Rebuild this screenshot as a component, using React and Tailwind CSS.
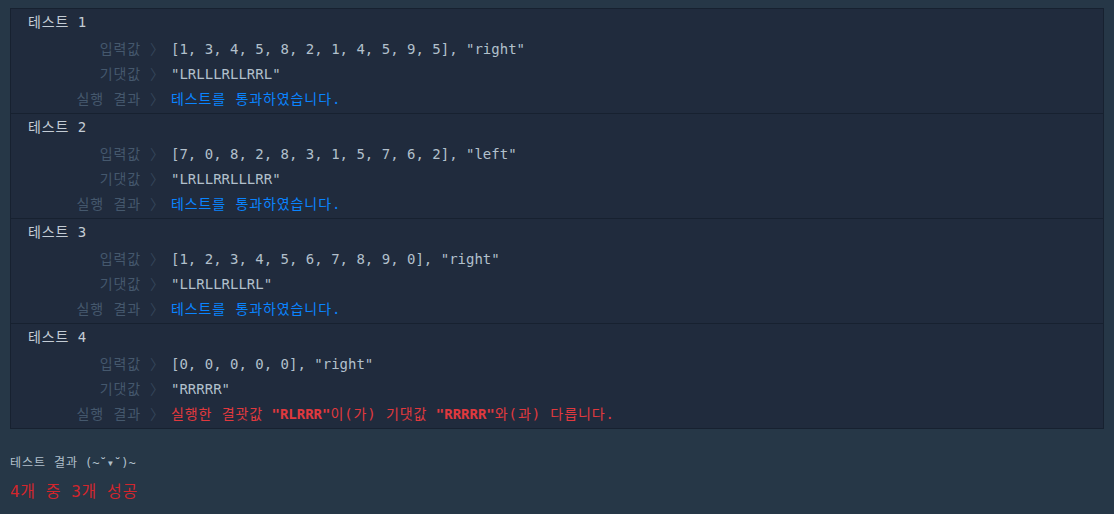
const tests = [
  {
    input: '[1, 3, 4, 5, 8, 2, 1, 4, 5, 9, 5], "right"',
    expected: '"LRLLLRLLRRL"',
    pass: true,
  },
  {
    input: '[7, 0, 8, 2, 8, 3, 1, 5, 7, 6, 2], "left"',
    expected: '"LRLLRRLLLRR"',
    pass: true,
  },
  {
    input: '[1, 2, 3, 4, 5, 6, 7, 8, 9, 0], "right"',
    expected: '"LLRLLRLLRL"',
    pass: true,
  },
  {
    input: '[0, 0, 0, 0, 0], "right"',
    expected: '"RRRRR"',
    pass: false,
    actual: '"RLRRR"',
  },
];

// hangul in the reference is a full 1em wide
function K({ children }) {
  return <span className="tracking-[0.9px]">{children}</span>;
}

function Row({ label, children }) {
  return (
    <div className="flex h-[25px] items-center">
      <div className="w-[130px] text-right text-[#45586d]">
        <K>{label}</K>
      </div>
      <div className="w-[30px] pl-[9px] text-[#34455a]">〉</div>
      <div>{children}</div>
    </div>
  );
}

export default function App() {
  return (
    <div
      className="w-[1114px] h-[514px] bg-[#263747] pt-2 overflow-hidden"
      style={{ fontFamily: '"DejaVu Sans Mono", "Noto Sans CJK KR", monospace' }}
    >
      <div className="mx-[10px] border border-[#172130] bg-[#202b3d] text-[14px]">
        {tests.map((t, i) => (
          <div
            key={i}
            className={
              "pb-[1px] " + (i < tests.length - 1 ? "border-b border-[#172130]" : "")
            }
          >
            <div className="flex h-[27px] items-center pl-[17px] text-[#c3ccd5]">
              <K>테스트</K>&nbsp;{i + 1}
            </div>
            <div className="h-[1px]" />
            <Row label="입력값">
              <span className="text-[#b2c0cc]">{t.input}</span>
            </Row>
            <Row label="기댓값">
              <span className="text-[#b2c0cc]">{t.expected}</span>
            </Row>
            <Row label="실행 결과">
              {t.pass ? (
                <span className="text-[#0a84ff]">
                  <K>테스트를 통과하였습니다.</K>
                </span>
              ) : (
                <span className="text-[#e0393e]">
                  <K>실행한 결괏값</K> <b>{t.actual}</b>
                  <K>이(가) 기댓값</K> <b>{t.expected}</b>
                  <K>와(과) 다릅니다.</K>
                </span>
              )}
            </Row>
          </div>
        ))}
      </div>
      <div className="mt-[25px] pl-[10px] text-[12px] text-[#b2c0cc] leading-[18px]">
        <K>테스트 결과</K> (~˘▾˘)~
      </div>
      <div className="mt-[8px] pl-[10px] text-[16px] text-[#d2262d] leading-[24px]">
        <span className="tracking-[0.6px]">4개 중 3개 성공</span>
      </div>
    </div>
  );
}
